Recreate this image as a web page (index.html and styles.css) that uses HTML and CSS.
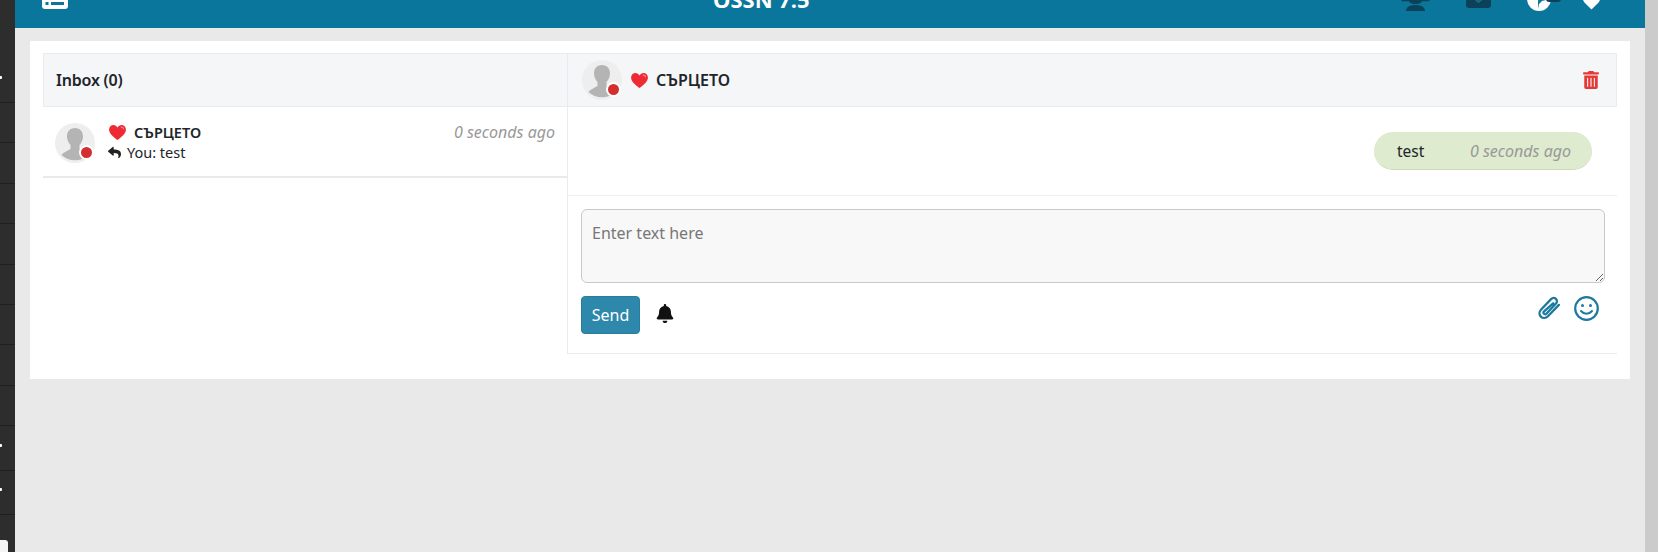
FILE: index.html
```html
<!DOCTYPE html>
<html lang="en">
<head>
<meta charset="utf-8">
<title>Messages</title>
<link rel="stylesheet" href="styles.css">
</head>
<body>
<div class="page">
  <aside class="sidebar">
    <div class="side-row side-first"><span class="chev"></span></div>
    <div class="side-row"></div>
    <div class="side-row"></div>
    <div class="side-row"></div>
    <div class="side-row"></div>
    <div class="side-row"></div>
    <div class="side-row"></div>
    <div class="side-row"></div>
    <div class="side-row"></div>
    <div class="side-row side-tall"><span class="chev"></span></div>
    <div class="side-row side-tall"><span class="chev"></span></div>
    <div class="side-last"><span class="side-tab"></span></div>
  </aside>
  <main class="main">
    <header class="topbar">
      <svg class="nav-card" viewBox="0 0 26 20"><rect width="26" height="20" rx="3" fill="#fff"/><rect x="3.500" y="13" width="3" height="3" fill="#0b769c"/><rect x="9" y="13" width="13" height="3" fill="#0b769c"/><rect x="3.500" y="6" width="19" height="3" fill="#0b769c"/></svg>
      <div class="brand">OSSN 7.5</div>
      <div class="nav-icons">
        <svg class="nav-people" viewBox="0 0 33 30"><path d="M1 17h31l-2 3.200H23q-1 2.800-6.500 2.800T10 20.200H3z" fill="#0c4259"/><path d="M7 30c0-4 4-6 9.500-6s9.500 2 9.500 6z" fill="#0c4259"/></svg>
        <svg class="nav-mail" viewBox="0 0 25 24"><rect width="25" height="24" rx="3" fill="#0c4259"/><path d="M8 14l4.500 4 4.500-4" fill="none" stroke="#1a6a87" stroke-width="2"/></svg>
        <span class="globe-wrap">
          <svg class="nav-globe" viewBox="0 0 24 24"><circle cx="12" cy="12" r="12" fill="#fff"/><path d="M11 22l1-5 3-3 4-1 1-4-5-2-3 3-1 4z" fill="#0b769c"/></svg>
          <span class="nav-badge"></span>
        </span>
        <svg class="nav-heart" viewBox="0 0 18 16"><path d="M9 16L1.500 8.500C-.5 6.500-.5 3 1.500 1.500S6.500 0 9 3c2.500-3 5.500-3 7.500-1.500S18.500 6.500 16.500 8.500z" fill="#fff"/></svg>
      </div>
    </header>
    <section class="content">
      <div class="card">
        <div class="panels">
          <div class="inbox">
            <div class="panel-head inbox-head">Inbox (0)</div>
            <div class="thread">
              <div class="avatar">
                <svg class="avatar-img" viewBox="0 0 40 40"><circle cx="20" cy="20" r="20" fill="#eeeeee"/><path d="M20 5c5 0 8 3.500 8 8.500 0 3.500-1.500 6.500-3.500 8.500v4c3 2 7 3 9 6A20 20 0 0 1 6.500 32c2-3 6-4 9-6v-4c-2-2-3.500-5-3.500-8.500C12 8.500 15 5 20 5z" fill="#b4b4b4"/></svg>
                <span class="status"></span>
              </div>
              <div class="thread-body">
                <div class="thread-line">
                  <div class="name"><svg class="heart" viewBox="0 0 18 16"><path d="M9 16C5 13 0 9.500 0 4.800 0 2 2.200 0 4.700 0 6.500 0 8 1 9 2.600 10 1 11.500 0 13.300 0 15.800 0 18 2 18 4.800 18 9.500 13 13 9 16z" fill="#ee2a35"/><path d="M12.500 2.500c1.500-.5 3 .5 3 2" fill="none" stroke="#f9848a" stroke-width="1.300"/></svg><b>СЪРЦЕТО</b></div>
                  <span class="time">0 seconds ago</span>
                </div>
                <div class="reply"><svg class="reply-icon" viewBox="0 0 512 512"><path d="M8.309 189.836L184.313 37.851C199.719 24.546 224 35.347 224 56.015v80.053c160.629 1.839 288 34.032 288 186.258 0 61.441-39.581 122.309-83.333 154.132-13.653 9.931-33.111-2.533-28.077-18.631 45.344-145.012-21.507-183.51-176.59-185.742V360c0 20.7-24.3 31.453-39.687 18.164l-176.004-152c-11.071-9.562-11.086-26.753 0-36.328z" fill="#222"/></svg>You: test</div>
              </div>
            </div>
          </div>
          <div class="chat">
            <div class="panel-head chat-head">
              <div class="avatar">
                <svg class="avatar-img" viewBox="0 0 40 40"><circle cx="20" cy="20" r="20" fill="#eeeeee"/><path d="M20 5c5 0 8 3.500 8 8.500 0 3.500-1.500 6.500-3.500 8.500v4c3 2 7 3 9 6A20 20 0 0 1 6.500 32c2-3 6-4 9-6v-4c-2-2-3.500-5-3.500-8.500C12 8.500 15 5 20 5z" fill="#b4b4b4"/></svg>
                <span class="status"></span>
              </div>
              <div class="name chat-name"><svg class="heart" viewBox="0 0 18 16"><path d="M9 16C5 13 0 9.500 0 4.800 0 2 2.200 0 4.700 0 6.500 0 8 1 9 2.600 10 1 11.500 0 13.300 0 15.800 0 18 2 18 4.800 18 9.500 13 13 9 16z" fill="#ee2a35"/><path d="M12.500 2.500c1.500-.5 3 .5 3 2" fill="none" stroke="#f9848a" stroke-width="1.300"/></svg><b>СЪРЦЕТО</b></div>
              <svg class="trash" viewBox="0 0 448 512"><path d="M32 464a48 48 0 0 0 48 48h288a48 48 0 0 0 48-48V128H32zm272-256a16 16 0 0 1 32 0v224a16 16 0 0 1-32 0zm-96 0a16 16 0 0 1 32 0v224a16 16 0 0 1-32 0zm-96 0a16 16 0 0 1 32 0v224a16 16 0 0 1-32 0zM432 32H312l-9.400-18.700A24 24 0 0 0 281.100 0H166.800a23.720 23.720 0 0 0-21.400 13.300L136 32H16A16 16 0 0 0 0 48v32a16 16 0 0 0 16 16h416a16 16 0 0 0 16-16V48a16 16 0 0 0-16-16z" fill="#e53935"/></svg>
            </div>
            <div class="messages">
              <div class="bubble"><span class="bubble-text">test</span><span class="time">0 seconds ago</span></div>
            </div>
            <div class="compose">
              <textarea class="input" placeholder="Enter text here"></textarea>
              <div class="actions">
                <button class="send" type="button">Send</button>
                <svg class="bell" viewBox="0 0 448 512"><path d="M224 512c35.320 0 63.970-28.650 63.970-64H160.030c0 35.350 28.650 64 63.970 64zm215.390-149.710c-19.320-20.760-55.470-51.990-55.470-154.290 0-77.700-54.480-139.900-127.940-155.160V32c0-17.670-14.320-32-31.980-32s-31.980 14.330-31.980 32v20.840C118.560 68.100 64.080 130.300 64.080 208c0 102.300-36.150 133.530-55.470 154.290-6 6.450-8.660 14.160-8.610 21.710.11 16.400 12.980 32 32.100 32h383.800c19.120 0 32-15.600 32.100-32 .05-7.550-2.610-15.270-8.610-21.710z" fill="#111"/></svg>
                <svg class="clip" viewBox="0 0 24 24"><path d="M21 8.500L10.500 19.500c-2 2-5 2-6.800.3-1.800-1.800-1.700-4.700.3-6.800l9.500-10c1.400-1.400 3.400-1.400 4.700-.2 1.300 1.300 1.200 3.300-.2 4.700l-9 9.500c-.7.700-1.700.7-2.300.1-.6-.6-.6-1.600.1-2.300L15.500 7" fill="none" stroke="#1b7a9e" stroke-width="2.200" stroke-linecap="round"/></svg>
                <svg class="smile" viewBox="0 0 25 25"><circle cx="12.500" cy="12.500" r="11.300" fill="none" stroke="#1b7a9e" stroke-width="2.200"/><circle cx="8.500" cy="9.500" r="1.500" fill="#1b7a9e"/><circle cx="16.500" cy="9.500" r="1.500" fill="#1b7a9e"/><path d="M7 15c3 3.500 8 3.500 11 0" fill="none" stroke="#1b7a9e" stroke-width="2" stroke-linecap="round"/></svg>
              </div>
            </div>
          </div>
        </div>
      </div>
    </section>
  </main>
  <div class="scroll-strip"></div>
</div>
</body>
</html>
```

FILE: styles.css
```css
* { box-sizing: border-box; }
html, body { margin: 0; height: 100%; overflow: hidden; }
body { font-family: "Noto Sans", "Open Sans", sans-serif; font-size: 15px; color: #212529; background: #e9e9e9; }
.page { display: flex; height: 552px; width: 1658px; }

.sidebar { width: 15px; flex: none; background: #2d2d2d; display: flex; flex-direction: column; }
.side-row { height: 40.4px; border-bottom: 1px solid #1f1f1f; position: relative; overflow: hidden; flex: none; }
.side-first { height: 103px; }
.side-tall { height: 44.5px; }
.side-last { flex: 1; display: flex; align-items: flex-end; }
.side-tab { width: 8px; height: 12px; background: #f4f4f4; border-top-right-radius: 3px; }
.chev { position: absolute; left: -3px; bottom: 23px; width: 5px; height: 3px; background: #fff; border-radius: 1px; }

.main { flex: 1; min-width: 0; display: flex; flex-direction: column; }
.scroll-strip { width: 13px; flex: none; background: #cbcbcb; }

.topbar { height: 28px; flex: none; background: #0b769c; overflow: hidden; display: flex; align-items: flex-end; padding: 0 45px 18px 27px; }
.nav-card { width: 26px; height: 20px; flex: none; margin-bottom: 1px; }
.brand { margin-left: 645px; font-size: 22px; font-weight: 700; line-height: 30px; color: #fff; margin-bottom: -4px; white-space: nowrap; }
.nav-icons { margin-left: auto; display: flex; align-items: flex-end; }
.nav-people { width: 33px; height: 30px; margin-bottom: -1px; }
.nav-mail { width: 25px; height: 24px; margin-left: 34px; margin-bottom: 2px; }
.globe-wrap { position: relative; display: block; margin-left: 36px; margin-bottom: -1px; width: 24px; height: 24px; }
.nav-globe { display: block; width: 24px; height: 24px; }
.nav-badge { position: absolute; left: 19px; top: 0; width: 15px; height: 15px; border-radius: 3px; background: #0c4259; }
.nav-heart { width: 17px; height: 16px; margin-left: 32px; margin-bottom: 0; }

.content { flex: 1; padding: 13px 15px; }
.card { background: #fff; padding: 12px 13px 25px; }
.panels { display: flex; height: 301px; }
.inbox { width: 524px; flex: none; }
.chat { flex: 1; min-width: 0; border-left: 1px solid #e9ebee; border-bottom: 1px solid #e9ebee; display: flex; flex-direction: column; }

.panel-head { height: 54px; background: #f5f6f8; border: 1px solid #e9ebee; display: flex; align-items: center; }
.inbox-head { padding-left: 12px; font-size: 16px; font-weight: 600; letter-spacing: -0.2px; border-right: 0; }
.chat-head { padding: 0 17px 0 14px; border-left: 0; }

.thread { height: 71px; border-bottom: 2px solid #e9e9e9; padding: 16px 12px 0; display: flex; }
.avatar { position: relative; width: 40px; height: 40px; flex: none; }
.avatar-img { display: block; width: 40px; height: 40px; }
.status { position: absolute; right: 1px; bottom: 3px; width: 15px; height: 15px; border-radius: 50%; background: #d32f2f; border: 2px solid #fff; }

.thread-body { flex: 1; min-width: 0; margin-left: 13px; }
.thread-line { display: flex; justify-content: space-between; align-items: center; height: 22px; margin-top: -2px; }
.name { display: flex; align-items: center; font-size: 14.500px; }
.name b { font-weight: 600; }
.heart { width: 17px; height: 15px; margin-left: 1px; margin-right: 8px; }
.time { font-style: italic; color: #999; font-size: 16px; }
.reply { display: flex; align-items: center; height: 18px; font-size: 14.500px; }
.reply-icon { width: 13px; height: 13px; margin-right: 6px; }

.chat-name { margin-left: 8px; font-size: 16px; }
.trash { width: 16px; height: 18px; margin-left: auto; }

.messages { height: 89px; padding: 25px 25px 0 0; display: flex; justify-content: flex-end; border-bottom: 1px solid #eeeeee; }
.bubble { width: 218px; height: 38px; background: #dfebcf; border-bottom: 1px solid #cdd9bd; border-radius: 19px; display: flex; align-items: center; justify-content: space-between; padding: 0 21px 0 23px; }
.bubble-text { font-size: 15.500px; }

.compose { padding: 13px 12px 0 13px; }
.input { display: block; width: 100%; height: 74px; background: #f8f8f8; border: 1px solid #c9c9c9; border-radius: 6px; padding: 12px 10px; font-family: inherit; font-size: 16px; margin: 0; }
.input::placeholder { color: #777; }
.actions { display: flex; align-items: flex-start; margin-top: 13px; }
.send { width: 59px; height: 38px; background: #2d88ac; border: 1px solid #287c9d; border-radius: 4px; color: #fff; font-family: inherit; font-size: 16px; padding: 0; }
.bell { width: 18px; height: 19px; margin: 8px 0 0 16px; }
.clip { width: 25px; height: 25px; margin-left: auto; }
.smile { width: 25px; height: 25px; margin: 0 6px 0 12px; }
```
